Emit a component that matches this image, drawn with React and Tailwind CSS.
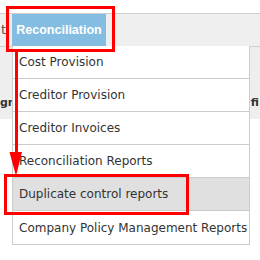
import React from 'react';

const items = [
  'Cost Provision',
  'Creditor Provision',
  'Creditor Invoices',
  'Reconciliation Reports',
  'Duplicate control reports',
  'Company Policy Management Reports',
];

export default function App() {
  return (
    <div className="relative w-[260px] h-[260px] overflow-hidden bg-white font-['DejaVu_Sans',Verdana,sans-serif]">
      {/* Top menu bar */}
      <div className="h-[13px]" />
      <div className="flex h-[34px] bg-[#efefef] border-y border-[#cfcfcf]">
        <div className="w-[12px] flex items-center pl-[1px] text-[13px] text-[#555]">
          <span>t</span>
        </div>
        <div className="w-[94px] bg-[#85bde2] flex items-center justify-center text-white font-bold text-[12.5px] font-['Liberation_Sans',Arial,sans-serif]">
          Reconciliation
        </div>
        <div className="flex-1" />
      </div>

      {/* Table header behind the menu */}
      <div className="h-[72px] bg-[#eeeeee] flex justify-between items-end pb-[8px] text-[11px] font-bold text-[#333]">
        <span>gn</span>
        <span className="pr-[1px]">fi</span>
      </div>

      {/* Dropdown menu */}
      <div className="absolute left-[12px] top-[46px] w-[238px] bg-white border-x border-b border-[#cccccc]">
        {items.map((label, i) => (
          <div
            key={label}
            className={`h-[33px] flex items-center pl-[6px] text-[12px] text-[#333] whitespace-nowrap ${i < items.length - 1 ? 'border-b border-[#cccccc]' : ''} ${i === 4 ? 'bg-[#e0e0e0]' : ''}`}
          >
            {label}
          </div>
        ))}
      </div>

      {/* Annotations */}
      <div className="absolute left-[6px] top-[6px] w-[109px] h-[46px] border-[3.5px] border-[#ff0000]" />
      <div className="absolute left-[4px] top-[174px] w-[185px] h-[41px] border-[3.5px] border-[#ff0000]" />
      <svg className="absolute left-0 top-0" width="260" height="260">
        <rect x="15" y="50" width="3" height="104" fill="#ff0000" />
        <polygon points="9.5,152 22,152 16,176" fill="#ff0000" />
      </svg>
    </div>
  );
}
